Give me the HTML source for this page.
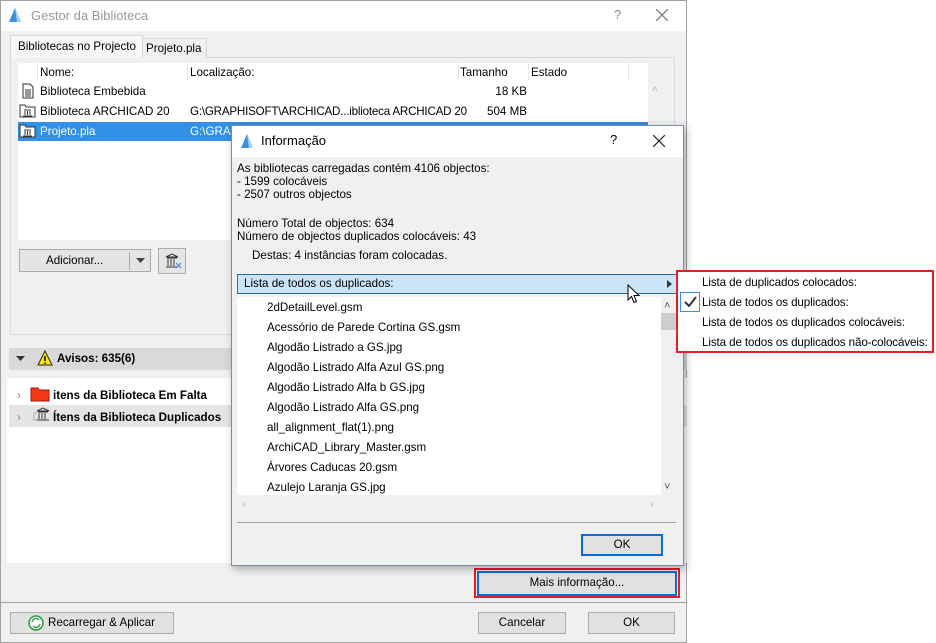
<!DOCTYPE html>
<html><head><meta charset="utf-8"><style>
*{box-sizing:border-box;margin:0;padding:0}
body{width:936px;height:643px;background:#fff;font-family:"Liberation Sans",sans-serif;font-size:11.6px;color:#000;position:relative;overflow:hidden}
.a{position:absolute}
.t{position:absolute;white-space:nowrap;line-height:14px}
.btn{position:absolute;background:#e1e1e1;border:1px solid #adadad;text-align:center;line-height:20px}
.sep{position:absolute;width:1px;background:#e5e5e5}
</style></head><body>
<div class="a" style="left:0;top:0;width:687px;height:643px;background:#f0f0f0;border:1px solid #a0a0a0"></div>
<div class="a" style="left:1px;top:1px;width:685px;height:30px;background:#fff"></div>
<svg class="a" style="left:8px;top:7px" width="14" height="16"><path d="M1 15 L7 1 L13 15 Z" fill="#3b8fe0"/><path d="M7 1 L9 15 L13 15Z" fill="#a9d0f5"/></svg>
<div class="t" style="left:31px;top:9px;color:#999;font-size:13px">Gestor da Biblioteca</div>
<div class="t" style="left:614px;top:8px;color:#888;font-size:13px">?</div>
<svg class="a" style="left:656px;top:9px" width="12" height="12"><path d="M0 0L12 12M12 0L0 12" stroke="#777" stroke-width="1.2"/></svg>
<div class="a" style="left:10px;top:57px;width:665px;height:278px;border:1px solid #d9d9d9;background:#f0f0f0"></div>
<div class="a" style="left:10px;top:35px;width:133px;height:23px;background:#f7f7f7;border:1px solid #d9d9d9;border-bottom:none"></div>
<div class="t" style="left:18px;top:40px">Bibliotecas no Projecto</div>
<div class="a" style="left:142px;top:38px;width:65px;height:20px;border:1px solid #d9d9d9;border-bottom:none;background:#f0f0f0"></div>
<div class="t" style="left:146px;top:42px">Projeto.pla</div>
<div class="a" style="left:18px;top:63px;width:630px;height:177px;background:#fff"></div>
<div class="a" style="left:648px;top:63px;width:20px;height:172px;background:#f0f0f0"></div>
<div class="t" style="left:652px;top:85px;color:#bbb">&#94;</div>
<div class="sep" style="left:37px;top:63px;height:18px"></div>
<div class="sep" style="left:187px;top:63px;height:18px"></div>
<div class="sep" style="left:458px;top:63px;height:18px"></div>
<div class="sep" style="left:528px;top:63px;height:18px"></div>
<div class="sep" style="left:628px;top:63px;height:18px"></div>
<div class="t" style="left:40px;top:66px">Nome:</div>
<div class="t" style="left:190px;top:66px">Localização:</div>
<div class="t" style="left:460px;top:66px">Tamanho</div>
<div class="t" style="left:531px;top:66px">Estado</div>
<svg class="a" style="left:22px;top:83px" width="12" height="16"><path d="M1 1H8L11 4V15H1Z" fill="#fff" stroke="#333"/><path d="M3 7H9M4 8V12M6 8V12M8 8V12M3 13H9" stroke="#333"/></svg>
<div class="t" style="left:40px;top:85px">Biblioteca Embebida</div>
<div class="t" style="left:460px;top:85px;width:67px;text-align:right">18 KB</div>
<svg class="a" style="left:19px;top:104px" width="17" height="14"><path d="M1 1H6L7 3H16V13H1Z" fill="#fff" stroke="#333"/><path d="M5 6H12M6 7V11M8.5 7V11M11 7V11M4 12H13" stroke="#333"/></svg>
<div class="t" style="left:40px;top:105px">Biblioteca ARCHICAD 20</div>
<div class="t" style="left:190px;top:105px;letter-spacing:-0.2px">G:\GRAPHISOFT\ARCHICAD...iblioteca ARCHICAD 20</div>
<div class="t" style="left:460px;top:105px;width:67px;text-align:right">504 MB</div>
<div class="a" style="left:18px;top:122px;width:630px;height:19px;background:#3390e8"></div>
<svg class="a" style="left:19px;top:124px" width="17" height="14"><path d="M1 1H6L7 3H16V13H1Z" fill="#fff" stroke="#333"/><path d="M5 6H12M6 7V11M8.5 7V11M11 7V11M4 12H13" stroke="#333"/></svg>
<div class="t" style="left:40px;top:125px;color:#fff">Projeto.pla</div>
<div class="t" style="left:190px;top:125px;color:#fff">G:\GRAPHISOFT</div>
<div class="btn" style="left:19px;top:249px;width:132px;height:23px;border-color:#aaa;background:#e5e5e5"><span style="position:absolute;left:26px;top:1px">Adicionar...</span><span style="position:absolute;left:109px;top:2px;width:1px;height:18px;background:#aaa"></span><svg style="position:absolute;left:116px;top:8px" width="9" height="5"><path d="M0 0H9L4.5 5Z" fill="#444"/></svg></div>
<div class="btn" style="left:158px;top:248px;width:28px;height:26px;background:#e5e5e5"><svg style="position:absolute;left:5px;top:4px" width="18" height="17"><path d="M2 4L8 1L14 4ZM3 5H13M4 6V13M7 6V13M10 6V13M2 14H13" stroke="#333" fill="none"/><path d="M12 10L17 15M17 10L12 15" stroke="#3a7fd8"/></svg></div>
<div class="a" style="left:9px;top:348px;width:678px;height:22px;background:#d9d9d9"></div>
<svg class="a" style="left:16px;top:356px" width="9" height="5"><path d="M0 0H9L4.5 5Z" fill="#333"/></svg>
<svg class="a" style="left:37px;top:350px" width="16" height="16"><path d="M8 1L15 15H1Z" fill="#ffeb00" stroke="#222"/><path d="M8 6V11M8 12.5V14" stroke="#000" stroke-width="1.5"/></svg>
<div class="t" style="left:57px;top:352px;font-weight:bold">Avisos: 635(6)</div>
<div class="a" style="left:7px;top:378px;width:680px;height:185px;background:#fff"></div>
<div class="a" style="left:9px;top:405px;width:678px;height:22px;background:#e5e5e5"></div>
<div class="t" style="left:17px;top:389px;color:#888">&#8250;</div>
<div class="t" style="left:17px;top:411px;color:#888">&#8250;</div>
<svg class="a" style="left:30px;top:387px" width="20" height="15"><path d="M1 1H8L9 3H19V14H1Z" fill="#f43a14" stroke="#a11"/></svg>
<div class="t" style="left:53px;top:389px;font-weight:bold">itens da Biblioteca Em Falta</div>
<svg class="a" style="left:31px;top:407px" width="20" height="16"><path d="M6 4L12 1L18 4ZM7 5H17M8 6V12M11 6V12M14 6V12M6 13H18" stroke="#333" fill="none"/><path d="M2 6H6M3 7V12M2 13H6" stroke="#aaa"/></svg>
<div class="t" style="left:53px;top:411px;font-weight:bold">Ítens da Biblioteca Duplicados</div>
<div class="a" style="left:474px;top:568px;width:206px;height:30px;border:2px solid #e81c24"></div>
<div class="btn" style="left:477px;top:571px;width:200px;height:25px;border:2px solid #0a6cd6;line-height:20px">Mais informação...</div>
<div class="a" style="left:1px;top:602px;width:685px;height:1px;background:#a0a0a0"></div>
<div class="btn" style="left:10px;top:612px;width:164px;height:22px"><svg style="position:absolute;left:17px;top:2px" width="16" height="16"><circle cx="8" cy="8" r="7" fill="#fff" stroke="#2a9d45" stroke-width="1.5"/><path d="M4 7A4 4 0 0 1 11 5M12 9A4 4 0 0 1 5 11" stroke="#2a9d45" fill="none" stroke-width="1.3"/></svg><span style="position:absolute;left:37px;top:0">Recarregar &amp; Aplicar</span></div>
<div class="btn" style="left:478px;top:612px;width:88px;height:22px">Cancelar</div>
<div class="btn" style="left:588px;top:612px;width:87px;height:22px">OK</div>
<div class="a" style="left:231px;top:125px;width:453px;height:441px;background:#f0f0f0;border:1px solid #7a8ea6;box-shadow:2px 3px 8px rgba(0,0,0,.3)"></div>
<div class="a" style="left:232px;top:126px;width:451px;height:31px;background:#fff"></div>
<svg class="a" style="left:240px;top:133px" width="14" height="16"><path d="M1 15 L7 1 L13 15 Z" fill="#3b8fe0"/><path d="M7 1 L9 15 L13 15Z" fill="#a9d0f5"/></svg>
<div class="t" style="left:261px;top:134px;font-size:13px">Informação</div>
<div class="t" style="left:610px;top:133px;font-size:13px">?</div>
<svg class="a" style="left:653px;top:135px" width="12" height="12"><path d="M0 0L12 12M12 0L0 12" stroke="#222" stroke-width="1.2"/></svg>
<div class="t" style="left:237px;top:162px;line-height:13px">As bibliotecas carregadas contém 4106 objectos:<br>- 1599 colocáveis<br>- 2507 outros objectos</div>
<div class="t" style="left:237px;top:217px;line-height:13px">Número Total de objectos: 634<br>Número de objectos duplicados colocáveis: 43</div>
<div class="t" style="left:252px;top:249px">Destas: 4 instâncias foram colocadas.</div>
<div class="a" style="left:237px;top:274px;width:440px;height:20px;background:#cce4f7;border:1px solid #2f6ba8"></div>
<div class="t" style="left:244px;top:277px">Lista de todos os duplicados:</div>
<svg class="a" style="left:667px;top:280px" width="5" height="8"><path d="M0 0L5 4L0 8Z" fill="#333"/></svg>
<div class="a" style="left:237px;top:297px;width:424px;height:198px;background:#fff"></div>
<div class="a" style="left:661px;top:313px;width:15px;height:17px;background:#cdcdcd"></div>
<div class="t" style="left:664px;top:299px;color:#555;font-size:11px">&#708;</div>
<div class="t" style="left:664px;top:480px;color:#555;font-size:11px">&#709;</div>
<div class="t" style="left:242px;top:498px;color:#bbb">&#8249;</div>
<div class="t" style="left:650px;top:498px;color:#bbb">&#8250;</div>
<div class="t" style="left:267px;top:298px;line-height:20px">2dDetailLevel.gsm<br>Acessório de Parede Cortina GS.gsm<br>Algodão Listrado a GS.jpg<br>Algodão Listrado Alfa Azul GS.png<br>Algodão Listrado Alfa b GS.jpg<br>Algodão Listrado Alfa GS.png<br>all_alignment_flat(1).png<br>ArchiCAD_Library_Master.gsm<br>Árvores Caducas 20.gsm<br>Azulejo Laranja GS.jpg</div>
<div class="a" style="left:237px;top:522px;width:439px;height:1px;background:#a0a0a0"></div>
<div class="btn" style="left:581px;top:534px;width:82px;height:22px;border:2px solid #0a6cd6;line-height:18px">OK</div>
<svg class="a" style="left:627px;top:284px" width="13" height="20"><path d="M1 1V16L4.5 12.5L7 18.5L9.5 17.5L7 11.5H12Z" fill="#fff" stroke="#000"/></svg>
<div class="a" style="left:676px;top:270px;width:258px;height:83px;background:#fff;border:2px solid #e81c24"></div>
<div class="a" style="left:680px;top:292px;width:20px;height:20px;border:1px solid #3c8fe0"></div>
<svg class="a" style="left:684px;top:296px" width="13" height="11"><path d="M1 6L5 10L12 1" stroke="#333" stroke-width="2" fill="none"/></svg>
<div class="t" style="left:702px;top:273px;line-height:20px;letter-spacing:-0.1px">Lista de duplicados colocados:<br>Lista de todos os duplicados:<br>Lista de todos os duplicados colocáveis:<br>Lista de todos os duplicados não-colocáveis:</div>
</body></html>
